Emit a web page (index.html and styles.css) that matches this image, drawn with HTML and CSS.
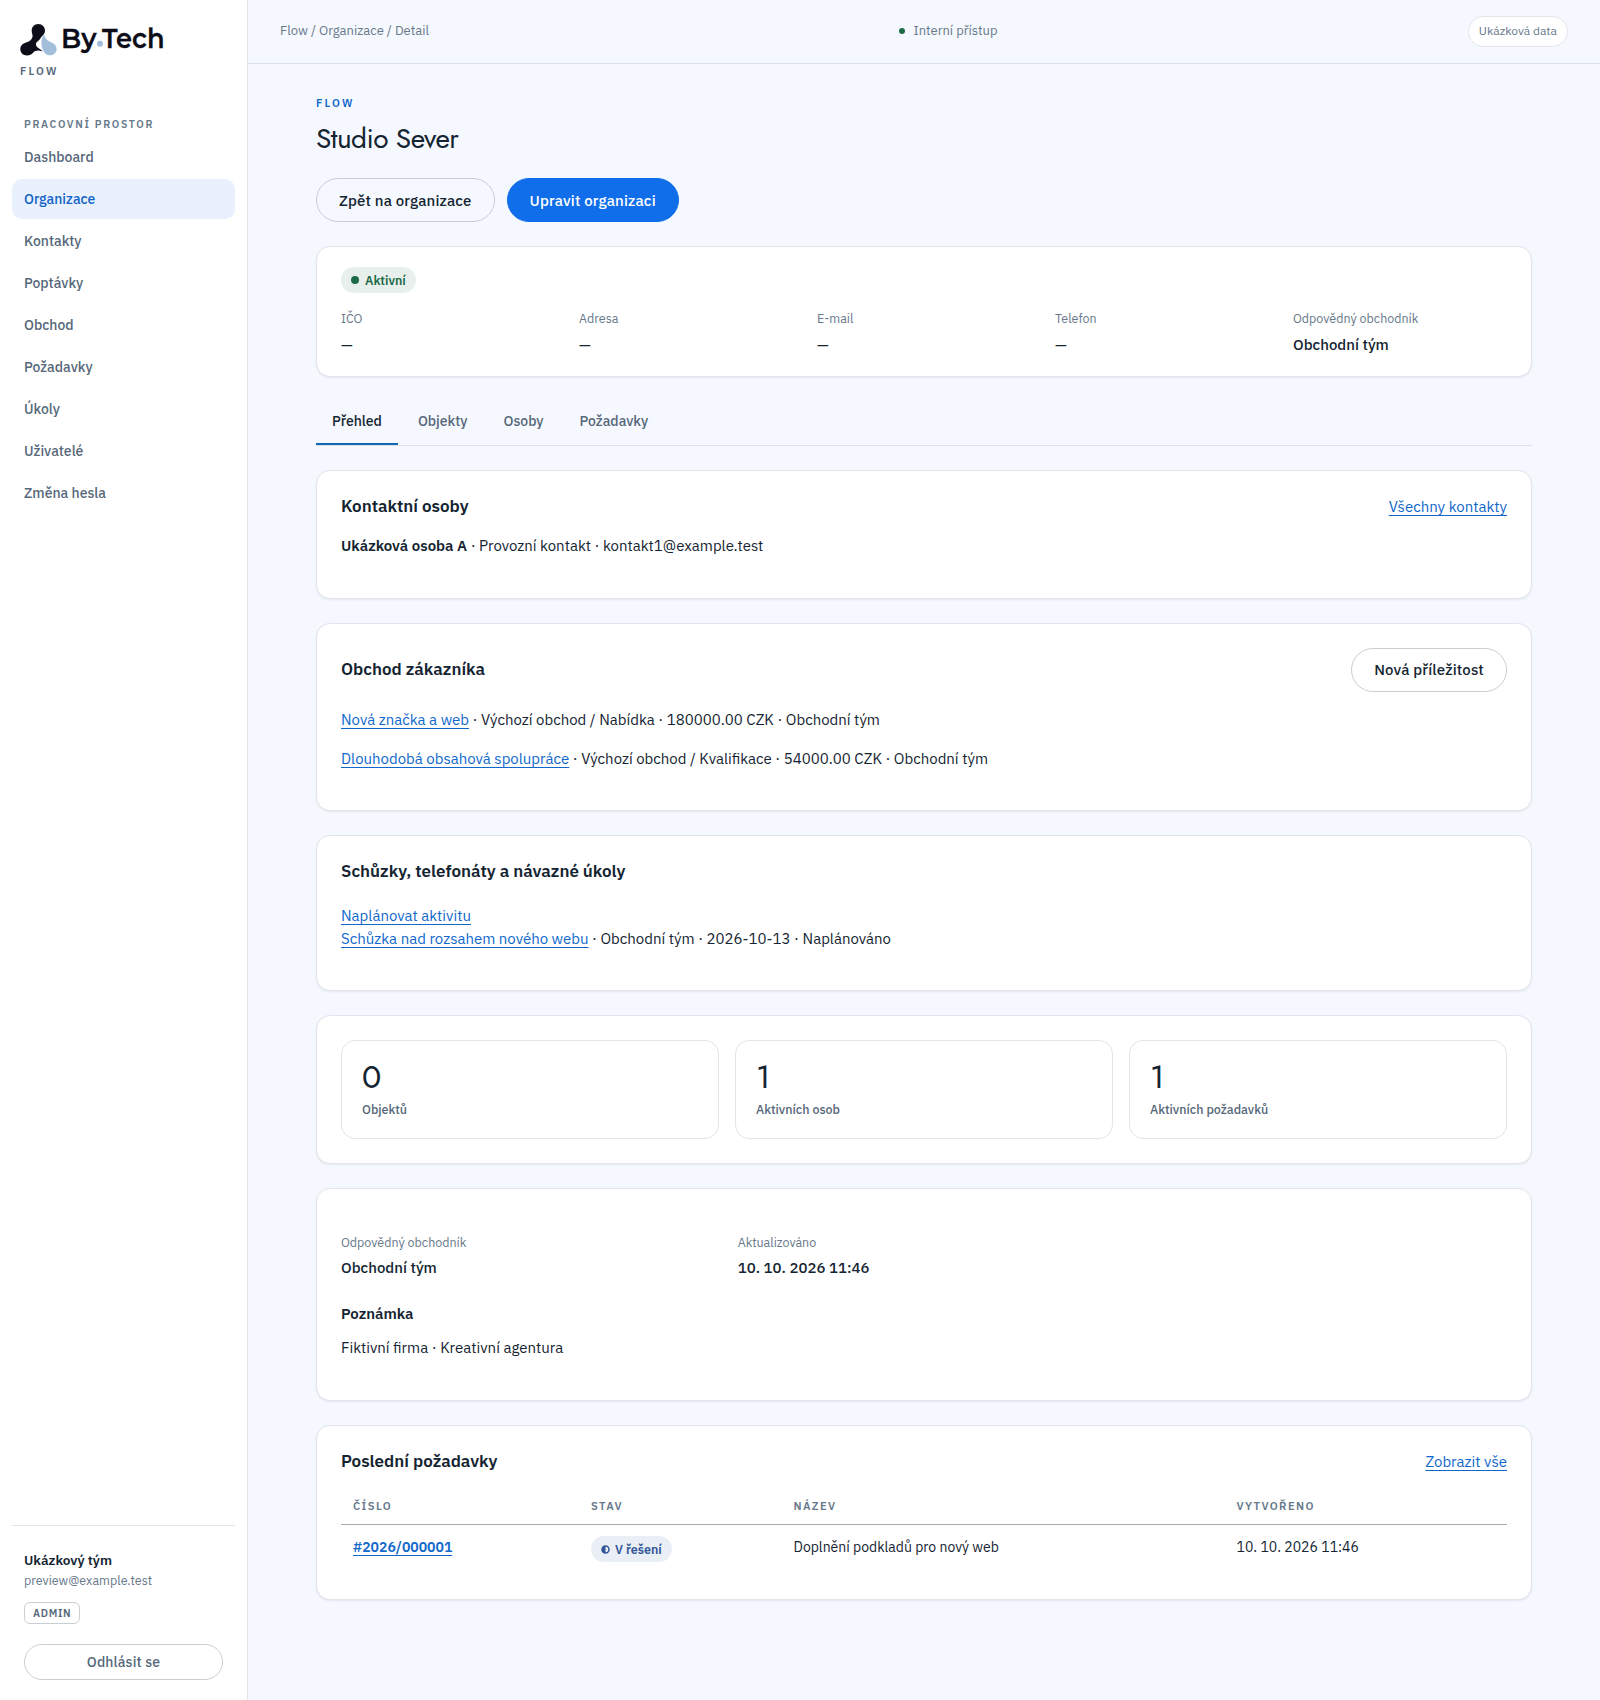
FILE: index.html
```html
<!DOCTYPE html>
<html lang="cs">
<head>
    <meta charset="UTF-8">
    <meta name="viewport" content="width=device-width, initial-scale=1.0">
    <title>Studio Sever | Flow</title>
    <link rel="stylesheet" href="styles.css">
</head>
<body>
    <div class="layout">
        <aside class="sidebar">
            <div class="brand">
                <svg class="brand-logo" width="160" height="36" viewBox="0 0 160 36" aria-label="By.Tech">
                    <path fill="#0c0d18" d="M18.300 3.900C22 3.900 25 6.800 25 10.400C25 15 21.500 15.500 20 19C18.500 21.500 16 21.500 16 24.500C16 27.500 20 28.500 22.700 31.300C19.500 30.300 17 30.200 14.700 31.200C13 32 12 35.400 7 35.400C3.200 35.400 0.300 32.700 0.300 29.200C0.300 25.500 3 23.500 6 22.600C10 21.400 13 19 12.500 15C12.200 13.200 11.700 12.500 11.700 10.400C11.700 6.800 14.600 3.900 18.300 3.900Z"/>
                    <path fill="#a2bedb" d="M24 14.300C25 19 28 21 31.500 22.400C34.500 23.500 36.600 25.700 36.600 29C36.600 32.600 33.700 35.300 30 35.300C26.500 35.300 24.500 33.500 23 30C21 26 20.500 20 24 14.300Z"/>
                    <text class="brand-name" x="41" y="27.500" textLength="35.500" lengthAdjust="spacingAndGlyphs">By</text>
                    <circle cx="80" cy="23.800" r="3" fill="#a2bedb"/>
                    <text class="brand-name" x="82" y="27.500" textLength="62.500" lengthAdjust="spacingAndGlyphs">Tech</text>
                </svg>
                <span class="brand-sub">FLOW</span>
            </div>

            <div class="nav-label">PRACOVNÍ PROSTOR</div>
            <nav class="nav">
                <a class="nav-link" href="#">Dashboard</a>
                <a class="nav-link active" href="#">Organizace</a>
                <a class="nav-link" href="#">Kontakty</a>
                <a class="nav-link" href="#">Poptávky</a>
                <a class="nav-link" href="#">Obchod</a>
                <a class="nav-link" href="#">Požadavky</a>
                <a class="nav-link" href="#">Úkoly</a>
                <a class="nav-link" href="#">Uživatelé</a>
                <a class="nav-link" href="#">Změna hesla</a>
            </nav>

            <div class="user">
                <strong class="user-name">Ukázkový tým</strong>
                <span class="user-mail">preview@example.test</span>
                <span class="role">ADMIN</span>
                <button class="logout" type="button">Odhlásit se</button>
            </div>
        </aside>

        <div class="main">
            <header class="topbar">
                <span class="breadcrumb">Flow / Organizace / Detail</span>
                <span class="access"><i class="access-dot"></i>Interní přístup</span>
                <span class="demo-tag">Ukázková data</span>
            </header>

            <main class="content">
                <div class="eyebrow">FLOW</div>
                <h1>Studio Sever</h1>
                <div class="actions">
                    <a class="btn" href="#">Zpět na organizace</a>
                    <a class="btn btn-primary" href="#">Upravit organizaci</a>
                </div>

                <section class="card summary">
                    <span class="badge badge-green"><i class="badge-dot"></i>Aktivní</span>
                    <dl class="facts facts-5">
                        <div><dt>IČO</dt><dd>—</dd></div>
                        <div><dt>Adresa</dt><dd>—</dd></div>
                        <div><dt>E-mail</dt><dd>—</dd></div>
                        <div><dt>Telefon</dt><dd>—</dd></div>
                        <div><dt>Odpovědný obchodník</dt><dd>Obchodní tým</dd></div>
                    </dl>
                </section>

                <nav class="tabs">
                    <a class="tab active" href="#">Přehled</a>
                    <a class="tab" href="#">Objekty</a>
                    <a class="tab" href="#">Osoby</a>
                    <a class="tab" href="#">Požadavky</a>
                </nav>

                <section class="card contacts">
                    <div class="card-head">
                        <h2>Kontaktní osoby</h2>
                        <a class="link" href="#">Všechny kontakty</a>
                    </div>
                    <p><strong>Ukázková osoba A</strong> · Provozní kontakt · kontakt1@example.test</p>
                </section>

                <section class="card deals">
                    <div class="card-head">
                        <h2>Obchod zákazníka</h2>
                        <a class="btn btn-deal" href="#">Nová příležitost</a>
                    </div>
                    <p><a class="link" href="#">Nová značka a web</a> · Výchozí obchod / Nabídka · 180000.00 CZK · Obchodní tým</p>
                    <p><a class="link" href="#">Dlouhodobá obsahová spolupráce</a> · Výchozí obchod / Kvalifikace · 54000.00 CZK · Obchodní tým</p>
                </section>

                <section class="card activities">
                    <h2>Schůzky, telefonáty a návazné úkoly</h2>
                    <a class="link" href="#">Naplánovat aktivitu</a>
                    <p><a class="link" href="#">Schůzka nad rozsahem nového webu</a> · Obchodní tým · 2026-10-13 · Naplánováno</p>
                </section>

                <section class="card stats">
                    <div class="stat"><strong>0</strong><span>Objektů</span></div>
                    <div class="stat"><strong>1</strong><span>Aktivních osob</span></div>
                    <div class="stat"><strong>1</strong><span>Aktivních požadavků</span></div>
                </section>

                <section class="card detail">
                    <dl class="facts facts-3">
                        <div><dt>Odpovědný obchodník</dt><dd>Obchodní tým</dd></div>
                        <div><dt>Aktualizováno</dt><dd>10. 10. 2026 11:46</dd></div>
                    </dl>
                    <h3>Poznámka</h3>
                    <p>Fiktivní firma · Kreativní agentura</p>
                </section>

                <section class="card requests">
                    <div class="card-head">
                        <h2>Poslední požadavky</h2>
                        <a class="link" href="#">Zobrazit vše</a>
                    </div>
                    <table class="table">
                        <thead>
                            <tr>
                                <th class="col-number">ČÍSLO</th>
                                <th class="col-state">STAV</th>
                                <th class="col-name">NÁZEV</th>
                                <th>VYTVOŘENO</th>
                            </tr>
                        </thead>
                        <tbody>
                            <tr>
                                <td><a class="link link-strong" href="#">#2026/000001</a></td>
                                <td>
                                    <span class="badge badge-blue">
                                        <svg class="badge-half" width="9" height="9" viewBox="0 0 9 9">
                                            <circle cx="4.500" cy="4.500" r="3.500" fill="none" stroke="#2f5597" stroke-width="1.500"/>
                                            <path d="M4.500 1a3.500 3.500 0 0 0 0 7z" fill="#2f5597"/>
                                        </svg>V řešení
                                    </span>
                                </td>
                                <td>Doplnění podkladů pro nový web</td>
                                <td>10. 10. 2026 11:46</td>
                            </tr>
                        </tbody>
                    </table>
                </section>
            </main>
        </div>
    </div>
</body>
</html>
```

FILE: styles.css
```css
* {
    margin: 0;
    padding: 0;
    box-sizing: border-box;
}

body {
    background-color: #f5f8fe;
    color: #142431;
    font-family: 'IBM Plex Sans', Roboto, sans-serif;
    font-size: 15px;
    line-height: 23px;
}

a {
    color: inherit;
    text-decoration: none;
}

.layout {
    display: flex;
    min-height: 1700px;
}

/* Sidebar */
.sidebar {
    width: 248px;
    flex-shrink: 0;
    display: flex;
    flex-direction: column;
    padding: 20px 12px;
    background-color: #fff;
    border-right: 1px solid #e2e5e9;
}

.brand {
    display: flex;
    flex-direction: column;
    padding: 0 8px;
}

.brand-logo {
    overflow: visible;
}

.brand-name {
    font-family: Montserrat, Inter, sans-serif;
    font-size: 27px;
    font-weight: 600;
    fill: #0c0d18;
    stroke: #0c0d18;
    stroke-width: 0.3px;
}

.brand-sub {
    margin-top: 7px;
    font-size: 11px;
    font-weight: 600;
    line-height: 16px;
    letter-spacing: 2.2px;
    color: #566779;
}

.nav-label {
    margin-top: 36px;
    padding: 0 12px;
    font-size: 10.5px;
    font-weight: 600;
    line-height: 18px;
    letter-spacing: 1.7px;
    color: #66788a;
}

.nav {
    display: flex;
    flex-direction: column;
    gap: 2px;
    margin-top: 4px;
}

.nav-link {
    padding: 0 12px;
    border-radius: 10px;
    font-size: 14px;
    font-weight: 500;
    line-height: 40px;
    color: #566779;
}

.nav-link.active {
    background-color: #e9f1fe;
    color: #1062c4;
}

.user {
    display: flex;
    flex-direction: column;
    align-items: flex-start;
    margin-top: auto;
    padding: 24px 12px 0;
    border-top: 1px solid #e2e5e6;
}

.user-name {
    font-size: 13.6px;
    font-weight: 600;
    line-height: 21px;
}

.user-mail {
    font-size: 12.5px;
    line-height: 19px;
    color: #66788a;
}

.role {
    margin-top: 12px;
    padding: 0 8px;
    border: 1px solid #c9ced3;
    border-radius: 6px;
    font-size: 10.5px;
    font-weight: 600;
    line-height: 20px;
    letter-spacing: 0.7px;
    color: #566779;
}

.logout {
    width: 100%;
    height: 36px;
    margin-top: 20px;
    background-color: #fff;
    border: 1px solid #c9ced3;
    border-radius: 18px;
    font-family: inherit;
    font-size: 14px;
    font-weight: 500;
    letter-spacing: 0.15px;
    color: #566779;
}

/* Top bar */
.main {
    flex: 1;
}

.topbar {
    display: flex;
    align-items: center;
    justify-content: space-between;
    padding: 16px 32px;
    border-bottom: 1px solid #dae0e8;
    font-size: 13px;
    line-height: 20.15px;
    color: #66788a;
}

.access {
    display: flex;
    align-items: center;
    gap: 8px;
}

.access-dot {
    width: 6px;
    height: 6px;
    border-radius: 50%;
    background-color: #1e6b48;
}

.demo-tag {
    padding: 5px 10px;
    background-color: #fff;
    border: 1px solid #e2e5e9;
    border-radius: 16px;
    font-size: 12px;
    line-height: 18.6px;
}

/* Content */
.content {
    width: 1216px;
    margin: 0 auto;
    padding-top: 30.4px;
}

.eyebrow {
    font-size: 11px;
    font-weight: 600;
    line-height: 18px;
    letter-spacing: 2.2px;
    color: #1068cc;
}

h1 {
    margin-top: 8px;
    font-family: Jost, Lato, sans-serif;
    font-size: 28px;
    font-weight: 400;
    line-height: 38px;
    letter-spacing: -0.55px;
}

.actions {
    display: flex;
    gap: 12px;
    margin: 20px 0 24px;
}

.btn {
    padding: 1px 22px 0;
    border: 1px solid #c9ced3;
    border-radius: 22px;
    font-size: 15px;
    font-weight: 500;
    line-height: 41px;
    letter-spacing: 0.15px;
}

.btn-primary {
    background-color: #106eea;
    border-color: #106eea;
    color: #fff;
}

.btn-deal {
    padding-top: 0;
    background-color: #fff;
    line-height: 42px;
}

.card {
    margin-bottom: 24px;
    padding: 24px;
    background-color: #fff;
    border: 1px solid #e2e5e9;
    border-radius: 14px;
    box-shadow: 0 1px 2px rgba(20, 36, 49, 0.08);
}

.card-head {
    display: flex;
    align-items: flex-start;
    justify-content: space-between;
}

h2 {
    font-size: 17px;
    font-weight: 600;
    line-height: 22px;
}

strong {
    font-weight: 600;
}

.link {
    color: #1068cc;
    text-decoration: underline;
    text-decoration-thickness: 1px;
    text-underline-offset: 3px;
    text-decoration-skip-ink: none;
}

.link-strong {
    font-weight: 600;
}

.badge {
    display: inline-flex;
    align-items: center;
    padding: 0 10px;
    border-radius: 13px;
    font-size: 12.5px;
    font-weight: 600;
    line-height: 26px;
}

.badge-green {
    background-color: #e8f0ed;
    color: #1e6b48;
}

.badge-dot {
    width: 8px;
    height: 8px;
    margin-right: 6px;
    border-radius: 50%;
    background-color: #1e6b48;
}

.badge-blue {
    background-color: #eaeff6;
    color: #2f5597;
}

.badge-half {
    margin-right: 5px;
}

.facts {
    display: grid;
    gap: 24px;
}

.facts-5 {
    grid-template-columns: repeat(5, 1fr);
}

.facts-3 {
    grid-template-columns: repeat(3, 1fr);
}

dt {
    font-size: 12.5px;
    line-height: 20px;
    color: #66788a;
}

dd {
    margin-top: 5px;
    font-weight: 500;
}

.summary {
    height: 131px;
    padding-top: 20px;
}

.summary .badge {
    display: flex;
    width: max-content;
    margin-bottom: 15px;
}

.tabs {
    display: flex;
    gap: 4px;
    height: 45px;
    margin-bottom: 24px;
    border-bottom: 1px solid #dae0e6;
}

.tab {
    height: 44px;
    padding: 0 16px;
    font-size: 14px;
    font-weight: 500;
    line-height: 40px;
    color: #566779;
}

.tab.active {
    border-bottom: 2px solid #1068b4;
    color: #142431;
}

.contacts {
    height: 129px;
}

.contacts p {
    margin-top: 16px;
}

.deals {
    height: 188px;
}

.deals h2 {
    padding-top: 10px;
}

.deals p {
    margin-top: 16px;
}

.activities {
    height: 156px;
}

.activities h2 {
    margin-bottom: 22px;
}

.stats {
    display: grid;
    grid-template-columns: repeat(3, 1fr);
    gap: 16px;
}

.stat {
    display: flex;
    flex-direction: column;
    height: 99px;
    padding: 18px 20px;
    border: 1px solid #e2e5e9;
    border-radius: 14px;
}

.stat strong {
    font-family: Jost, Lato, sans-serif;
    font-size: 32px;
    font-weight: 400;
    line-height: 36px;
}

.stat span {
    margin-top: 4px;
    font-size: 12.5px;
    font-weight: 500;
    line-height: 20px;
    color: #566779;
}

.detail {
    height: 213px;
    padding-top: 43px;
}

.detail dd {
    margin-top: 4px;
}

.detail h3 {
    margin-top: 23px;
    font-size: 15px;
    font-weight: 600;
}

.detail p {
    margin-top: 11px;
}

.requests {
    height: 175px;
}

/* Requests table */
.table {
    width: 100%;
    margin-top: 16px;
    border-collapse: collapse;
    table-layout: fixed;
    font-size: 14px;
}

.table th {
    height: 36px;
    padding: 0 12px;
    border-bottom: 1px solid #a3abb2;
    font-size: 11.2px;
    font-weight: 600;
    letter-spacing: 1.4px;
    text-align: left;
    color: #66788a;
}

.table td {
    padding: 11px 12px;
    vertical-align: top;
    line-height: 22px;
}

.table .col-number {
    width: 238px;
}

.table .col-state {
    width: 202.500px;
}

.table .col-name {
    width: 443px;
}
```
